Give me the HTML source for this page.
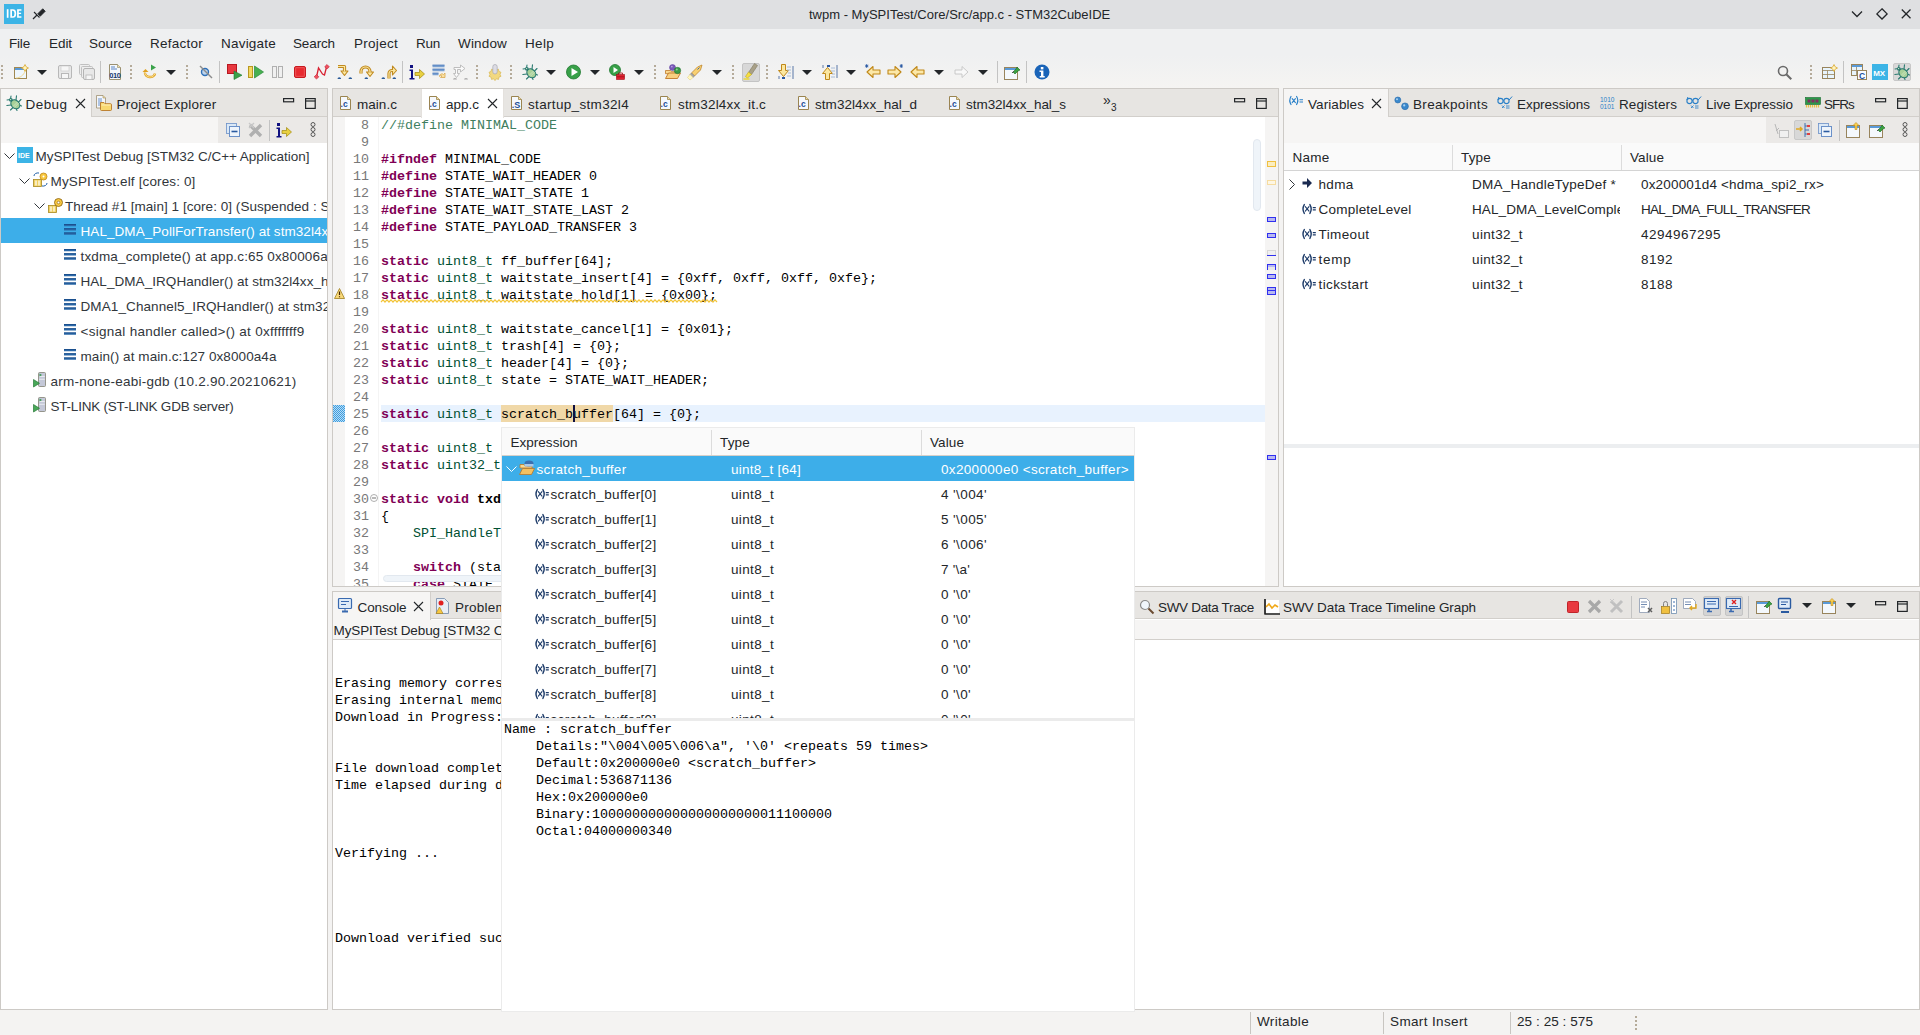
<!DOCTYPE html><html><head><meta charset="utf-8"><style>
*{box-sizing:border-box;margin:0;padding:0}
html,body{width:1920px;height:1035px;overflow:hidden;background:#f4f3f2;font-family:"Liberation Sans",sans-serif;font-size:13.5px;color:#232629}
.a{position:absolute}
.t{position:absolute;white-space:nowrap;line-height:16px}
.m{position:absolute;white-space:pre;font-family:"Liberation Mono",monospace;font-size:13.333px;line-height:17px;color:#000}
.kw{color:#7f0055;font-weight:bold}
.ty{color:#005032}
.cm{color:#3f7f5f}
.fn{font-weight:bold}
.panel{position:absolute;background:#fff;border:1px solid #c9c6c2;overflow:hidden}
.tabbar{position:absolute;left:0;top:0;right:0;height:29px;background:#e6e3df;border-bottom:1px solid #cdcac6}
.clip{position:absolute;overflow:hidden}
svg{position:absolute;overflow:visible}
</style></head><body>
<div class="a" style="left:0;top:0;width:1920px;height:29px;background:#dfe0e2"></div>
<svg style="left:4px;top:4px" width="20" height="20"><rect width="20" height="20" fill="#3cb4e6"/><rect x="2.8" y="5.2" width="1.7" height="8.6" fill="#fff"/><path d="M6.3 5.2h2.6a3.3 4.3 0 0 1 0 8.6h-2.6zM8 6.8v5.4h0.8a1.7 2.7 0 0 0 0-5.4z" fill="#fff" fill-rule="evenodd"/><path d="M13.1 5.2h4.3v1.5h-2.6v2h2.3v1.4h-2.3v2.2h2.6v1.5h-4.3z" fill="#fff"/></svg>
<svg style="left:32px;top:6px" width="14" height="14"><path d="M8.24 10.24L13.24 5.24L10.76 2.76L5.76 7.76z" fill="#232629" stroke="#232629" stroke-width="0.8" stroke-linejoin="round"/><path d="M2 6l5.5 5.5" stroke="#232629" stroke-width="1.1"/><path d="M1 13l4-4" stroke="#232629" stroke-width="1.3"/></svg>
<div class="t" style="left:809px;top:6.90px;font-size:13px;color:#232629;">twpm - MySPITest/Core/Src/app.c - STM32CubeIDE</div>
<svg style="left:1851px;top:8px" width="12" height="12"><path d="M1 3.5l5 5 5-5" stroke="#232629" stroke-width="1.3" fill="none"/></svg>
<svg style="left:1876px;top:8px" width="12" height="12"><path d="M6 0.8l5.1 5.1-5.1 5.1-5.1-5.1z" stroke="#232629" stroke-width="1.3" fill="none"/></svg>
<svg style="left:1901px;top:9px" width="10" height="10"><path d="M0.8 0.5l8.7 8.7M9.5 0.5l-8.7 8.7" stroke="#232629" stroke-width="1.3" fill="none"/></svg>
<div class="a" style="left:0;top:29px;width:1920px;height:26px;background:#eff0f1"></div>
<div class="a" style="left:0;top:55px;width:1920px;height:33px;background:linear-gradient(#eff0f1,#f5f4f2)"></div>
<div class="t" style="left:9px;top:35.82px;color:#232629;letter-spacing:-0.191px;">File</div>
<div class="t" style="left:49px;top:35.82px;color:#232629;letter-spacing:-0.066px;">Edit</div>
<div class="t" style="left:89px;top:35.82px;color:#232629;letter-spacing:0.036px;">Source</div>
<div class="t" style="left:150px;top:35.82px;color:#232629;letter-spacing:0.246px;">Refactor</div>
<div class="t" style="left:221px;top:35.82px;color:#232629;letter-spacing:0.213px;">Navigate</div>
<div class="t" style="left:293px;top:35.82px;color:#232629;letter-spacing:-0.130px;">Search</div>
<div class="t" style="left:354px;top:35.82px;color:#232629;letter-spacing:0.281px;">Project</div>
<div class="t" style="left:416px;top:35.82px;color:#232629;letter-spacing:-0.255px;">Run</div>
<div class="t" style="left:458px;top:35.82px;color:#232629;letter-spacing:0.164px;">Window</div>
<div class="t" style="left:525px;top:35.82px;color:#232629;letter-spacing:0.309px;">Help</div>
<svg style="left:1px;top:65px" width="2" height="16" viewBox="0 0 2 16"><rect x="0" y="0" width="2" height="2" fill="#b5ab9a"/><rect x="0" y="4" width="2" height="2" fill="#b5ab9a"/><rect x="0" y="8" width="2" height="2" fill="#b5ab9a"/><rect x="0" y="12" width="2" height="2" fill="#b5ab9a"/></svg>
<svg style="left:13px;top:64px" width="16" height="16" viewBox="0 0 16 16"><rect x="1.5" y="3.5" width="12" height="11" fill="#eef6fc" stroke="#a08850"/><rect x="2" y="4" width="11" height="2" fill="#5a9ad8"/><path d="M12 0.5l1.2 2.3 2.3 1.2-2.3 1.2-1.2 2.3-1.2-2.3-2.3-1.2 2.3-1.2z" fill="#fff4c0" stroke="#d9a830" stroke-width="0.8"/><path d="M3 14c4 0 8-3 9-7" stroke="#f0d890" fill="none"/></svg>
<svg style="left:37px;top:70px" width="10" height="6" viewBox="0 0 10 6"><path d="M0 0h10l-5 5z" fill="#232629"/></svg>
<svg style="left:57px;top:64px" width="16" height="16" viewBox="0 0 16 16"><rect x="1.5" y="1.5" width="13" height="13" rx="1.5" fill="#e8e8e8" stroke="#b8b8b8"/><rect x="4" y="2" width="8" height="5" fill="#f6f6f6" stroke="#c8c8c8" stroke-width="0.6"/><rect x="4.5" y="9.5" width="7" height="5" fill="#f6f6f6" stroke="#b8b8b8"/></svg>
<svg style="left:79px;top:64px" width="16" height="16" viewBox="0 0 16 16"><rect x="0.5" y="0.5" width="10" height="10" rx="1" fill="#eee" stroke="#c0c0c0"/><rect x="2.5" y="2.5" width="11" height="11" rx="1" fill="#eee" stroke="#c0c0c0"/><rect x="4.5" y="4.5" width="11" height="11" rx="1.5" fill="#e8e8e8" stroke="#b4b4b4"/><rect x="7" y="11" width="6" height="4.5" fill="#f6f6f6" stroke="#b8b8b8" stroke-width="0.8"/></svg>
<div class="a" style="left:100px;top:61px;width:1px;height:22px;background:#c3c3c3"></div>
<svg style="left:108px;top:64px" width="16" height="16" viewBox="0 0 16 16"><path d="M1.5 0.5h8l3 3v12h-11z" fill="#f4f8fc" stroke="#9a9070"/><path d="M9.5 0.5v3h3" fill="#f0e0b0" stroke="#9a9070" stroke-width="0.7"/><path d="M3 3h4M3 5h6" stroke="#4a78c0" stroke-width="0.9"/><text x="1.3" y="13.5" font-family="Liberation Sans" font-weight="bold" font-size="7.5" fill="#1a3a70" letter-spacing="-0.4">010</text></svg>
<svg style="left:130px;top:65px" width="2" height="16" viewBox="0 0 2 16"><rect x="0" y="0" width="2" height="2" fill="#b5ab9a"/><rect x="0" y="4" width="2" height="2" fill="#b5ab9a"/><rect x="0" y="8" width="2" height="2" fill="#b5ab9a"/><rect x="0" y="12" width="2" height="2" fill="#b5ab9a"/></svg>
<svg style="left:142px;top:64px" width="16" height="16" viewBox="0 0 16 16"><path d="M9 0.5v6l5-3z" fill="#3aa24a"/><path d="M3 8.5a5 4 0 1 0 10 1" stroke="#e0a020" stroke-width="2.4" fill="none"/><path d="M0.5 8l3-3 3 3z" fill="#e0a020"/><path d="M3 8.5a5 4 0 1 0 10 1" stroke="#fff2b0" stroke-width="0.8" fill="none"/></svg>
<svg style="left:166px;top:70px" width="10" height="6" viewBox="0 0 10 6"><path d="M0 0h10l-5 5z" fill="#232629"/></svg>
<svg style="left:186px;top:65px" width="2" height="16" viewBox="0 0 2 16"><rect x="0" y="0" width="2" height="2" fill="#b5ab9a"/><rect x="0" y="4" width="2" height="2" fill="#b5ab9a"/><rect x="0" y="8" width="2" height="2" fill="#b5ab9a"/><rect x="0" y="12" width="2" height="2" fill="#b5ab9a"/></svg>
<svg style="left:198px;top:64px" width="16" height="16" viewBox="0 0 16 16"><circle cx="7" cy="8" r="3.5" fill="#bcd4ee" stroke="#2f70b8" stroke-width="1.4"/><path d="M2 2l12 12" stroke="#8c8c8c" stroke-width="1.4"/></svg>
<div class="a" style="left:219px;top:61px;width:1px;height:22px;background:#c3c3c3"></div>
<svg style="left:227px;top:64px" width="16" height="16" viewBox="0 0 16 16"><rect x="0.5" y="0.5" width="9" height="9" fill="#e83840" stroke="#b81820"/><path d="M7 7v8.5l8-4.3z" fill="#3aa24a" stroke="#1f7a30" stroke-width="0.6"/></svg>
<svg style="left:248px;top:64px" width="16" height="16" viewBox="0 0 16 16"><rect x="0.5" y="2.5" width="4" height="11" fill="#f2d860" stroke="#b89820"/><path d="M6.5 2v12l9-6z" fill="#48b050" stroke="#2a8a3a" stroke-width="0.7"/></svg>
<svg style="left:271px;top:64px" width="16" height="16" viewBox="0 0 16 16"><rect x="1.5" y="2.5" width="4" height="11" fill="#f0f0f0" stroke="#b0b0b0"/><rect x="7.5" y="2.5" width="4" height="11" fill="#f0f0f0" stroke="#b0b0b0"/></svg>
<svg style="left:293px;top:64px" width="16" height="16" viewBox="0 0 16 16"><rect x="1.5" y="2.5" width="11" height="11" rx="1.5" fill="#e82a30" stroke="#c81a20"/><rect x="2.8" y="3.8" width="8.4" height="8.4" fill="none" stroke="#f07070" stroke-width="0.6"/></svg>
<svg style="left:314px;top:64px" width="16" height="16" viewBox="0 0 16 16"><path d="M2.5 13l2-9 4 6 2 1 2-8" stroke="#d82030" stroke-width="1.3" fill="none"/><path d="M2.5 10.5l2.3 2.3-2.3 2.3-2.3-2.3z" fill="#f05060" stroke="#c02030" stroke-width="0.6"/><path d="M13 0.5l2.3 2.3-2.3 2.3-2.3-2.3z" fill="#f05060" stroke="#c02030" stroke-width="0.6"/></svg>
<svg style="left:337px;top:64px" width="16" height="16" viewBox="0 0 16 16"><path d="M1 2.5h6.5v5" stroke="#c08a20" stroke-width="3.2" fill="none" stroke-linejoin="round"/><path d="M4 7h7l-3.5 4.5z" fill="#fbe7a0" stroke="#c08a20" stroke-width="1.1" stroke-linejoin="round"/><path d="M1 2.5h6.5v5" stroke="#fbe7a0" stroke-width="1.2" fill="none"/><path d="M0.5 15a1.8 1.8 0 0 1 3.6 0zM11.5 15a1.8 1.8 0 0 1 3.6 0z" fill="#2a5a98"/></svg>
<svg style="left:359px;top:64px" width="16" height="16" viewBox="0 0 16 16"><path d="M2 9.5v-2a4.5 4.5 0 0 1 9 0v1" stroke="#c08a20" stroke-width="3.2" fill="none"/><path d="M7.5 8h7l-3.5 4.5z" fill="#fbe7a0" stroke="#c08a20" stroke-width="1.1" stroke-linejoin="round"/><path d="M2 9.5v-2a4.5 4.5 0 0 1 9 0v1" stroke="#fbe7a0" stroke-width="1.2" fill="none"/><path d="M5.5 15a1.8 1.8 0 0 1 3.6 0z" fill="#2a5a98"/></svg>
<svg style="left:381px;top:64px" width="16" height="16" viewBox="0 0 16 16"><path d="M8 14.5v-5a3 3 0 0 1 3-3h1" stroke="#c08a20" stroke-width="3.2" fill="none"/><path d="M11.5 2l4 4.5-4 4.5z" fill="#fbe7a0" stroke="#c08a20" stroke-width="1.1" stroke-linejoin="round"/><path d="M8 14.5v-5a3 3 0 0 1 3-3h1" stroke="#fbe7a0" stroke-width="1.2" fill="none"/><path d="M0.5 15a1.8 1.8 0 0 1 3.6 0zM11.5 15a1.8 1.8 0 0 1 3.6 0z" fill="#2a5a98"/></svg>
<div class="a" style="left:402px;top:61px;width:1px;height:22px;background:#c3c3c3"></div>
<svg style="left:409px;top:64px" width="16" height="16" viewBox="0 0 16 16"><rect x="1" y="1" width="3" height="3" fill="#101080"/><path d="M0.5 5.5h3.5v8.5h1.5v1.5h-5v-1.5h1.5v-7h-1.5z" fill="#101080"/><path d="M6 8.5h4.5v-3l5 4.5-5 4.5v-3h-4.5z" fill="#e8d040" stroke="#a08810" stroke-width="0.7"/></svg>
<svg style="left:432px;top:64px" width="16" height="16" viewBox="0 0 16 16"><path d="M0.5 2h12M0.5 6h12M0.5 10h6" stroke="#7aa0d0" stroke-width="2.6"/><path d="M0.5 1.2h12M0.5 5.2h12M0.5 9.2h6" stroke="#5080c0" stroke-width="0.8"/><path d="M7.5 11.5c1-2 3.5-2 4-1l1.5-1.5v4.5h-4.5l1.5-1.5c-0.5-0.8-1.8-0.5-2.5 0.5z" fill="#fbe0a0" stroke="#d8a850" stroke-width="0.8"/></svg>
<svg style="left:453px;top:64px" width="16" height="16" viewBox="0 0 16 16"><path d="M1 3.5h6.5v-2.5l4.5 3.5-4.5 3.5v-2.5h-3v4h2l-3 4-3-4h2v-4h-1.5z" fill="#fafafa" stroke="#b8b8b8" stroke-width="0.9" stroke-linejoin="round"/><path d="M0 15.5a2 1.5 0 0 1 4 0zM11 15.5a2 1.5 0 0 1 4 0z" fill="#a8a8a8"/></svg>
<svg style="left:476px;top:65px" width="2" height="16" viewBox="0 0 2 16"><rect x="0" y="0" width="2" height="2" fill="#b5ab9a"/><rect x="0" y="4" width="2" height="2" fill="#b5ab9a"/><rect x="0" y="8" width="2" height="2" fill="#b5ab9a"/><rect x="0" y="12" width="2" height="2" fill="#b5ab9a"/></svg>
<svg style="left:487px;top:64px" width="16" height="16" viewBox="0 0 16 16"><path d="M8 4l1.3 1.8 2.2-0.6 0.4 2.2 2.1 0.9-1 2 1 2-2.1 0.9-0.4 2.2-2.2-0.6-1.3 1.8-1.3-1.8-2.2 0.6-0.4-2.2-2.1-0.9 1-2-1-2 2.1-0.9 0.4-2.2 2.2 0.6z" fill="#f2d880" stroke="#d8b850" stroke-width="0.7"/><rect x="5.8" y="0.5" width="4.4" height="9.5" rx="2.2" fill="#dcdce4" stroke="#a8a8b0" stroke-width="0.7"/></svg>
<svg style="left:510px;top:65px" width="2" height="16" viewBox="0 0 2 16"><rect x="0" y="0" width="2" height="2" fill="#b5ab9a"/><rect x="0" y="4" width="2" height="2" fill="#b5ab9a"/><rect x="0" y="8" width="2" height="2" fill="#b5ab9a"/><rect x="0" y="12" width="2" height="2" fill="#b5ab9a"/></svg>
<svg style="left:522px;top:64px" width="16" height="16" viewBox="0 0 16 16"><g stroke="#2a7a70" stroke-width="1.1" stroke-linecap="round"><path d="M4.5 4.5L1 5M4.5 4.5L5 1M7 12.5L4.5 15M12.5 7L15 4.5M5 10L0.8 10.5M10 5L10.5 0.8M10 13L11 15.5M13 10L15.5 11"/></g><ellipse cx="9.3" cy="9.3" rx="3.9" ry="5" transform="rotate(-45 9.3 9.3)" fill="#a8d098" stroke="#2a7a70" stroke-width="1.1"/><path d="M7 11.5L11.5 7M8.2 12.5L12.5 8.2" stroke="#d8ecd0" stroke-width="0.7"/><circle cx="4.8" cy="4.8" r="1.9" fill="#2a7a70"/><circle cx="4.6" cy="4.6" r="0.7" fill="#d8ecd0"/></svg>
<svg style="left:546px;top:70px" width="10" height="6" viewBox="0 0 10 6"><path d="M0 0h10l-5 5z" fill="#232629"/></svg>
<svg style="left:566px;top:64px" width="16" height="16" viewBox="0 0 16 16"><circle cx="7.5" cy="8" r="7" fill="#38a048" stroke="#1f7a30" stroke-width="0.8"/><path d="M5.5 4v8l6.5-4z" fill="#fff"/></svg>
<svg style="left:590px;top:70px" width="10" height="6" viewBox="0 0 10 6"><path d="M0 0h10l-5 5z" fill="#232629"/></svg>
<svg style="left:609px;top:64px" width="16" height="16" viewBox="0 0 16 16"><circle cx="6" cy="6" r="5.5" fill="#38a048" stroke="#1f7a30" stroke-width="0.8"/><path d="M4.5 3v6l4.5-3z" fill="#fff"/><rect x="7.5" y="10.5" width="8" height="5" fill="#e02030" stroke="#a01018" stroke-width="0.6"/><path d="M9.5 10.5v-1.5h4v1.5M7.5 12.8h8" stroke="#a01018" stroke-width="0.8" fill="none"/></svg>
<svg style="left:634px;top:70px" width="10" height="6" viewBox="0 0 10 6"><path d="M0 0h10l-5 5z" fill="#232629"/></svg>
<svg style="left:654px;top:65px" width="2" height="16" viewBox="0 0 2 16"><rect x="0" y="0" width="2" height="2" fill="#b5ab9a"/><rect x="0" y="4" width="2" height="2" fill="#b5ab9a"/><rect x="0" y="8" width="2" height="2" fill="#b5ab9a"/><rect x="0" y="12" width="2" height="2" fill="#b5ab9a"/></svg>
<svg style="left:665px;top:64px" width="16" height="16" viewBox="0 0 16 16"><path d="M0.5 6.5h5l1 1.2h6v2h-12z" fill="#f8d890" stroke="#c07828" stroke-width="0.8"/><path d="M0.5 14.5l3-5.5h12l-3 5.5z" fill="#f8d080" stroke="#c07828" stroke-width="0.9"/><circle cx="7.5" cy="3.5" r="3" fill="#7a5ab8" stroke="#5a3a98" stroke-width="0.5"/><circle cx="12.5" cy="6.5" r="3.2" fill="#3a9a48" stroke="#1a6a28" stroke-width="0.5"/><circle cx="11.8" cy="5.6" r="1" fill="#90d090"/><circle cx="6.8" cy="2.6" r="0.9" fill="#b8a0e0"/></svg>
<svg style="left:687px;top:64px" width="16" height="16" viewBox="0 0 16 16"><path d="M15 1l-1.5 5-6 6-3-3 6-6z" fill="#f8d070" stroke="#c08830" stroke-width="0.8"/><path d="M12.5 3.5l-2 2" stroke="#3a6ab0" stroke-width="1"/><path d="M4.5 9l3 3-1.5 1.5-3-3z" fill="#a8a8a8" stroke="#808080" stroke-width="0.6"/><path d="M3 10.5l3 3-3 2.5-2.5-2.5z" fill="#fff8c0" stroke="#e8d080" stroke-width="0.6"/></svg>
<svg style="left:712px;top:70px" width="10" height="6" viewBox="0 0 10 6"><path d="M0 0h10l-5 5z" fill="#232629"/></svg>
<svg style="left:732px;top:65px" width="2" height="16" viewBox="0 0 2 16"><rect x="0" y="0" width="2" height="2" fill="#b5ab9a"/><rect x="0" y="4" width="2" height="2" fill="#b5ab9a"/><rect x="0" y="8" width="2" height="2" fill="#b5ab9a"/><rect x="0" y="12" width="2" height="2" fill="#b5ab9a"/></svg>
<div class="a" style="left:742px;top:63px;width:18px;height:19px;background:#d8d8d8;border:1px solid #c4c4c4;border-radius:2px"></div>
<svg style="left:743px;top:64px" width="16" height="16" viewBox="0 0 16 16"><path d="M14.5 1.5l-6 9-3-2 6-9z" fill="#a8a088" stroke="#807860" stroke-width="0.6"/><path d="M8.5 10.5l-4 3.5-2-1.5 3-4.5z" fill="#f8e040" stroke="#c0a820" stroke-width="0.6"/><path d="M0.5 15h6" stroke="#f0d820" stroke-width="1.3"/></svg>
<svg style="left:766px;top:65px" width="2" height="16" viewBox="0 0 2 16"><rect x="0" y="0" width="2" height="2" fill="#b5ab9a"/><rect x="0" y="4" width="2" height="2" fill="#b5ab9a"/><rect x="0" y="8" width="2" height="2" fill="#b5ab9a"/><rect x="0" y="12" width="2" height="2" fill="#b5ab9a"/></svg>
<svg style="left:778px;top:64px" width="16" height="16" viewBox="0 0 16 16"><path d="M3.5 0.5h4v6h3l-5 6-5-6h3z" fill="#fbe7a0" stroke="#c08818" stroke-width="1"/><path d="M15 2v13M1 12v3" stroke="#5a78a8"/><path d="M9 3h4M9 6h4M10 9h3M9 12h4" stroke="#a8bcd8"/><rect x="4" y="13" width="3" height="2" fill="#2a58a0"/></svg>
<svg style="left:802px;top:70px" width="10" height="6" viewBox="0 0 10 6"><path d="M0 0h10l-5 5z" fill="#232629"/></svg>
<svg style="left:822px;top:64px" width="16" height="16" viewBox="0 0 16 16"><path d="M3.5 15.5h4v-6h3l-5-6-5 6h3z" fill="#fbe7a0" stroke="#c08818" stroke-width="1"/><path d="M15 1v13M1 1v3" stroke="#5a78a8"/><path d="M9 4h4M9 7h4M10 10h3M9 13h4" stroke="#a8bcd8"/><rect x="5" y="1" width="3" height="2" fill="#2a58a0"/></svg>
<svg style="left:846px;top:70px" width="10" height="6" viewBox="0 0 10 6"><path d="M0 0h10l-5 5z" fill="#232629"/></svg>
<svg style="left:865px;top:64px" width="16" height="16" viewBox="0 0 16 16"><path d="M15 6h-7v-3.5l-6 5.5 6 5.5v-3.5h7z" fill="#fce8a8" stroke="#c08818" stroke-width="1.1" stroke-linejoin="round"/><path d="M0.5 0.8l2.4 2.4M2.9 0.8l-2.4 2.4M1.7 0v4M0 2h3.4" stroke="#2050a0" stroke-width="0.8"/></svg>
<svg style="left:887px;top:64px" width="16" height="16" viewBox="0 0 16 16"><path d="M1 6h7v-3.5l6 5.5-6 5.5v-3.5h-7z" fill="#fce8a8" stroke="#c08818" stroke-width="1.1" stroke-linejoin="round"/><path d="M13.1 0.8l2.4 2.4M15.5 0.8l-2.4 2.4M14.3 0v4M12.6 2h3.4" stroke="#2050a0" stroke-width="0.8"/></svg>
<svg style="left:909px;top:64px" width="16" height="16" viewBox="0 0 16 16"><path d="M15 6h-7v-3.5l-6 5.5 6 5.5v-3.5h7z" fill="#fce8a8" stroke="#c08818" stroke-width="1.1" stroke-linejoin="round"/></svg>
<svg style="left:934px;top:70px" width="10" height="6" viewBox="0 0 10 6"><path d="M0 0h10l-5 5z" fill="#232629"/></svg>
<svg style="left:954px;top:64px" width="16" height="16" viewBox="0 0 16 16"><path d="M1 6h7v-3.5l6 5.5-6 5.5v-3.5h-7z" fill="#f8f8f8" stroke="#c4c4c4" stroke-width="0.9"/></svg>
<svg style="left:978px;top:70px" width="10" height="6" viewBox="0 0 10 6"><path d="M0 0h10l-5 5z" fill="#232629"/></svg>
<div class="a" style="left:997px;top:61px;width:1px;height:22px;background:#c3c3c3"></div>
<svg style="left:1004px;top:64px" width="16" height="16" viewBox="0 0 16 16"><rect x="0.5" y="3.5" width="13" height="12" fill="#f4f8fc" stroke="#98845c"/><rect x="1" y="4" width="12" height="2" fill="#5a9ad8"/><path d="M9 8l3-3 1-2 3 3-2 1-3 3z" fill="#3aa040" stroke="#1a6a20" stroke-width="0.6"/><path d="M8 9l2-2" stroke="#555"/></svg>
<div class="a" style="left:1026px;top:61px;width:1px;height:22px;background:#c3c3c3"></div>
<svg style="left:1034px;top:64px" width="16" height="16" viewBox="0 0 16 16"><circle cx="8" cy="8" r="7.5" fill="#1a64b8"/><rect x="6.8" y="3" width="2.6" height="2.4" fill="#fff"/><path d="M5.5 6.5h3.9v5.5h1.3v1.5h-5v-1.5h1.3v-4h-1.5z" fill="#fff"/></svg>
<svg style="left:1777px;top:65px" width="16" height="16" viewBox="0 0 16 16"><circle cx="6" cy="6" r="4.5" stroke="#6a6a6a" stroke-width="1.6" fill="none"/><path d="M9.3 9.3l5 5" stroke="#6a6a6a" stroke-width="2"/></svg>
<svg style="left:1810px;top:65px" width="2" height="16" viewBox="0 0 2 16"><rect x="0" y="0" width="2" height="2" fill="#b5ab9a"/><rect x="0" y="4" width="2" height="2" fill="#b5ab9a"/><rect x="0" y="8" width="2" height="2" fill="#b5ab9a"/><rect x="0" y="12" width="2" height="2" fill="#b5ab9a"/></svg>
<svg style="left:1822px;top:64px" width="16" height="16" viewBox="0 0 16 16"><rect x="0.5" y="3.5" width="12" height="11" fill="#e8f4fc" stroke="#98845c"/><path d="M0.5 6.5h12M5.5 6.5v8M0.5 10.5h12" stroke="#98845c" stroke-width="0.8"/><path d="M12 0.5l1.2 2.3 2.3 1.2-2.3 1.2-1.2 2.3-1.2-2.3-2.3-1.2 2.3-1.2z" fill="#fff4c0" stroke="#d9a830" stroke-width="0.8"/></svg>
<div class="a" style="left:1843px;top:61px;width:1px;height:22px;background:#c3c3c3"></div>
<svg style="left:1851px;top:64px" width="16" height="16" viewBox="0 0 16 16"><rect x="0.5" y="0.5" width="11" height="11" fill="#e8f4fc" stroke="#98845c"/><rect x="1" y="1" width="10" height="2" fill="#5a9ad8"/><path d="M0.5 6.5h11M5.5 3v8" stroke="#98845c" stroke-width="0.8"/><rect x="6.5" y="6.5" width="9" height="9" fill="#f8fbff" stroke="#98845c"/><text x="8" y="14.5" font-family="Liberation Sans" font-weight="bold" font-size="8.5" fill="#2050a0">C</text></svg>
<svg style="left:1872px;top:64px" width="16" height="16" viewBox="0 0 16 16"><rect x="0" y="0" width="16" height="16" fill="#3cb4e6"/><text x="1.2" y="11.5" font-family="Liberation Sans" font-weight="bold" font-size="8" fill="#fff">MX</text></svg>
<div class="a" style="left:1893px;top:63px;width:18px;height:18px;background:#d8d8d8;border:1px solid #c8c8c8;border-radius:2px"></div>
<svg style="left:1894px;top:64px" width="16" height="16" viewBox="0 0 16 16"><g stroke="#2a7a70" stroke-width="1.1" stroke-linecap="round"><path d="M4.5 4.5L1 5M4.5 4.5L5 1M7 12.5L4.5 15M12.5 7L15 4.5M5 10L0.8 10.5M10 5L10.5 0.8M10 13L11 15.5M13 10L15.5 11"/></g><ellipse cx="9.3" cy="9.3" rx="3.9" ry="5" transform="rotate(-45 9.3 9.3)" fill="#a8d098" stroke="#2a7a70" stroke-width="1.1"/><path d="M7 11.5L11.5 7M8.2 12.5L12.5 8.2" stroke="#d8ecd0" stroke-width="0.7"/><circle cx="4.8" cy="4.8" r="1.9" fill="#2a7a70"/><circle cx="4.6" cy="4.6" r="0.7" fill="#d8ecd0"/></svg>
<div class="a" style="left:0;top:88px;width:328px;height:922px;background:#fff;border:1px solid #cdcac6"></div>
<div class="a" style="left:1px;top:89px;width:326px;height:28px;background:#e7e5e2;border-bottom:1px solid #d2cfcb"></div>
<div class="a" style="left:1px;top:89px;width:91px;height:29px;background:#f6f5f4;border-right:1px solid #d2cfcb"></div>
<svg style="left:6px;top:95px" width="16" height="16" viewBox="0 0 16 16"><g stroke="#2a7a70" stroke-width="1.1" stroke-linecap="round"><path d="M4.5 4.5L1 5M4.5 4.5L5 1M7 12.5L4.5 15M12.5 7L15 4.5M5 10L0.8 10.5M10 5L10.5 0.8M10 13L11 15.5M13 10L15.5 11"/></g><ellipse cx="9.3" cy="9.3" rx="3.9" ry="5" transform="rotate(-45 9.3 9.3)" fill="#a8d098" stroke="#2a7a70" stroke-width="1.1"/><path d="M7 11.5L11.5 7M8.2 12.5L12.5 8.2" stroke="#d8ecd0" stroke-width="0.7"/><circle cx="4.8" cy="4.8" r="1.9" fill="#2a7a70"/><circle cx="4.6" cy="4.6" r="0.7" fill="#d8ecd0"/></svg>
<div class="t" style="left:25.5px;top:96.52px;letter-spacing:0.441px;">Debug</div>
<svg style="left:75px;top:98px" width="11" height="11" viewBox="0 0 11 11"><path d="M1 1l9 9M10 1l-9 9" stroke="#232629" stroke-width="1.1"/></svg>
<svg style="left:96px;top:95px" width="16" height="16" viewBox="0 0 16 16"><path d="M0.5 0.5h6.5l2.5 2.5v10h-9z" fill="#f4f6fa" stroke="#a09070" stroke-width="0.8"/><path d="M7 0.5v2.5h2.5" fill="#f0d890" stroke="#a09070" stroke-width="0.6"/><path d="M2 4h4M2 6h4M2 8h3M2 10h3" stroke="#5a88c8" stroke-width="0.9"/><path d="M4.5 7.5h3.5l1 1.2h5.5a1 1 0 0 1 1 1v4.8a1 1 0 0 1-1 1h-9a1 1 0 0 1-1-1z" fill="#f8d870" stroke="#b87828" stroke-width="0.9"/><path d="M5.5 10h9" stroke="#fff0b8" stroke-width="1"/></svg>
<div class="t" style="left:116.5px;top:96.52px;letter-spacing:0.247px;">Project Explorer</div>
<svg style="left:283px;top:98px" width="12" height="5" viewBox="0 0 12 5"><rect x="0.6" y="0.6" width="10" height="3.2" fill="none" stroke="#232629" stroke-width="1.2"/></svg>
<svg style="left:305px;top:98px" width="11" height="11" viewBox="0 0 11 11"><rect x="0.6" y="0.6" width="9.6" height="9.8" fill="none" stroke="#232629" stroke-width="1.2"/><path d="M0.6 3h9.6" stroke="#232629" stroke-width="1.2"/></svg>
<div class="a" style="left:1px;top:117px;width:326px;height:26px;background:#f6f5f4"></div>
<div class="a" style="left:218px;top:117px;width:109px;height:26px;background:#ebe9e7"></div>
<svg style="left:226px;top:123px" width="16" height="16" viewBox="0 0 16 16"><rect x="0.5" y="0.5" width="10" height="10" fill="#dae8f6" stroke="#6a90c8" stroke-width="0.8"/><rect x="3.5" y="3.5" width="10" height="10" fill="#eef4fb" stroke="#6a90c8"/><path d="M5.5 8.5h6" stroke="#2a5aa0" stroke-width="1.6"/></svg>
<svg style="left:248px;top:122px" width="16" height="16" viewBox="0 0 16 16"><path d="M2 3l11 11M13 3l-11 11" stroke="#b0b0b0" stroke-width="3.4"/><path d="M1 1l5 5M6 1l-5 5" stroke="#c8c8c8" stroke-width="1.4"/></svg>
<div class="a" style="left:269px;top:120px;width:1px;height:21px;background:#c3c3c3"></div>
<svg style="left:276px;top:122px" width="16" height="16" viewBox="0 0 16 16"><rect x="1" y="1" width="3" height="3" fill="#101080"/><path d="M0.5 5.5h3.5v8.5h1.5v1.5h-5v-1.5h1.5v-7h-1.5z" fill="#101080"/><path d="M6 8.5h4.5v-3l5 4.5-5 4.5v-3h-4.5z" fill="#e8d040" stroke="#a08810" stroke-width="0.7"/></svg>
<svg style="left:310px;top:122px" width="7" height="16" viewBox="0 0 7 16"><circle cx="3" cy="2.5" r="2" fill="none" stroke="#4a4a4a" stroke-width="0.9"/><circle cx="3" cy="7.5" r="2" fill="none" stroke="#4a4a4a" stroke-width="0.9"/><circle cx="3" cy="12.5" r="2" fill="none" stroke="#4a4a4a" stroke-width="0.9"/></svg>
<div class="clip" style="left:1px;top:143px;width:326px;height:300px">
<svg style="left:3px;top:10px" width="11" height="7" viewBox="0 0 11 7"><path d="M0.5 0.5l5 5 5-5" stroke="#31363b" stroke-width="1" fill="none"/></svg>
<svg style="left:16px;top:4px" width="16" height="16" viewBox="0 0 16 16"><rect x="0" y="0" width="16" height="16" fill="#3cb4e6"/><text x="1" y="11" font-family="Liberation Sans" font-weight="bold" font-size="7" fill="#fff">IDE</text></svg>
<div class="t" style="left:34.5px;top:5.72px;color:#31363b;letter-spacing:-0.016px;">MySPITest Debug [STM32 C/C++ Application]</div>
<svg style="left:18px;top:35px" width="11" height="7" viewBox="0 0 11 7"><path d="M0.5 0.5l5 5 5-5" stroke="#31363b" stroke-width="1" fill="none"/></svg>
<svg style="left:32px;top:29px" width="16" height="16" viewBox="0 0 16 16"><rect x="0.5" y="7.5" width="8" height="7" fill="#f0d060" stroke="#a88820" stroke-width="0.8"/><path d="M3 8.5v5M6 8.5v5" stroke="#fff" stroke-width="1.2"/><circle cx="10.5" cy="4.5" r="3.5" fill="#f8c840" stroke="#c08818" stroke-width="0.8"/><circle cx="10.5" cy="4.5" r="1" fill="#fff"/><path d="M1 4a4 3 0 0 1 5-3M9 14a4 3 0 0 0 5-3" stroke="#2060a8" stroke-width="1" fill="none"/></svg>
<div class="t" style="left:49.5px;top:30.72px;color:#31363b;letter-spacing:0.133px;">MySPITest.elf [cores: 0]</div>
<svg style="left:33px;top:60px" width="11" height="7" viewBox="0 0 11 7"><path d="M0.5 0.5l5 5 5-5" stroke="#31363b" stroke-width="1" fill="none"/></svg>
<svg style="left:47px;top:54px" width="16" height="16" viewBox="0 0 16 16"><rect x="0.5" y="8.5" width="8" height="7" fill="#f0d060" stroke="#a88820" stroke-width="0.8"/><path d="M3 9.5v5M6 9.5v5" stroke="#fff" stroke-width="1.2"/><circle cx="10.5" cy="5.5" r="4" fill="#f8c840" stroke="#886010" stroke-width="0.8"/><circle cx="10.5" cy="5.5" r="1.3" fill="#fff" stroke="#886010" stroke-width="0.6"/></svg>
<div class="t" style="left:64px;top:55.72px;color:#31363b;letter-spacing:0.044px;">Thread #1 [main] 1 [core: 0] (Suspended : Step)</div>
<div class="a" style="left:0;top:75px;width:326px;height:25px;background:#3daee9"></div>
<svg style="left:63px;top:81px" width="12" height="12" viewBox="0 0 12 12"><path d="M0 1.2h12M0 5.4h12M0 9.6h12" stroke="#2a68a8" stroke-width="2.3"/><path d="M0 0.5h12M0 4.7h12M0 8.9h12" stroke="#184a88" stroke-width="0.8"/></svg>
<div class="t" style="left:79.5px;top:80.72px;color:#fff;letter-spacing:0.061px;">HAL_DMA_PollForTransfer() at stm32l4xx_hal_dma.c:654 0x8002c38</div>
<svg style="left:63px;top:106px" width="12" height="12" viewBox="0 0 12 12"><path d="M0 1.2h12M0 5.4h12M0 9.6h12" stroke="#2a68a8" stroke-width="2.3"/><path d="M0 0.5h12M0 4.7h12M0 8.9h12" stroke="#184a88" stroke-width="0.8"/></svg>
<div class="t" style="left:79.5px;top:105.72px;color:#31363b;letter-spacing:0.153px;">txdma_complete() at app.c:65 0x80006a4</div>
<svg style="left:63px;top:131px" width="12" height="12" viewBox="0 0 12 12"><path d="M0 1.2h12M0 5.4h12M0 9.6h12" stroke="#2a68a8" stroke-width="2.3"/><path d="M0 0.5h12M0 4.7h12M0 8.9h12" stroke="#184a88" stroke-width="0.8"/></svg>
<div class="t" style="left:79.5px;top:130.72px;color:#31363b;letter-spacing:0.058px;">HAL_DMA_IRQHandler() at stm32l4xx_hal_dma.c:712 0x8002d40</div>
<svg style="left:63px;top:156px" width="12" height="12" viewBox="0 0 12 12"><path d="M0 1.2h12M0 5.4h12M0 9.6h12" stroke="#2a68a8" stroke-width="2.3"/><path d="M0 0.5h12M0 4.7h12M0 8.9h12" stroke="#184a88" stroke-width="0.8"/></svg>
<div class="t" style="left:79.5px;top:155.72px;color:#31363b;letter-spacing:0.104px;">DMA1_Channel5_IRQHandler() at stm32l4xx_it.c:210 0x80011c4</div>
<svg style="left:63px;top:181px" width="12" height="12" viewBox="0 0 12 12"><path d="M0 1.2h12M0 5.4h12M0 9.6h12" stroke="#2a68a8" stroke-width="2.3"/><path d="M0 0.5h12M0 4.7h12M0 8.9h12" stroke="#184a88" stroke-width="0.8"/></svg>
<div class="t" style="left:79.5px;top:180.72px;color:#31363b;letter-spacing:0.278px;">&lt;signal handler called&gt;() at 0xfffffff9</div>
<svg style="left:63px;top:206px" width="12" height="12" viewBox="0 0 12 12"><path d="M0 1.2h12M0 5.4h12M0 9.6h12" stroke="#2a68a8" stroke-width="2.3"/><path d="M0 0.5h12M0 4.7h12M0 8.9h12" stroke="#184a88" stroke-width="0.8"/></svg>
<div class="t" style="left:79.5px;top:205.72px;color:#31363b;letter-spacing:0.079px;">main() at main.c:127 0x8000a4a</div>
<svg style="left:31px;top:229px" width="16" height="16" viewBox="0 0 16 16"><rect x="6.5" y="0.5" width="7" height="14" rx="1" fill="#c4c8d8" stroke="#8c8c80" stroke-width="0.9"/><path d="M7.2 4.5h5.6M7.2 7.3h5.6" stroke="#e8eaf0" stroke-width="1"/><path d="M7.5 1.5v3l2.5-1.5z" fill="#3a9a50"/><path d="M1.5 7.5v7.5l6-3.7z" fill="#48a858" stroke="#2a7a3a" stroke-width="0.7"/></svg>
<div class="t" style="left:49.5px;top:230.72px;color:#31363b;letter-spacing:0.266px;">arm-none-eabi-gdb (10.2.90.20210621)</div>
<svg style="left:31px;top:254px" width="16" height="16" viewBox="0 0 16 16"><rect x="6.5" y="0.5" width="7" height="14" rx="1" fill="#c4c8d8" stroke="#8c8c80" stroke-width="0.9"/><path d="M7.2 4.5h5.6M7.2 7.3h5.6" stroke="#e8eaf0" stroke-width="1"/><path d="M7.5 1.5v3l2.5-1.5z" fill="#3a9a50"/><path d="M1.5 7.5v7.5l6-3.7z" fill="#48a858" stroke="#2a7a3a" stroke-width="0.7"/></svg>
<div class="t" style="left:49.5px;top:255.72px;color:#31363b;letter-spacing:-0.216px;">ST-LINK (ST-LINK GDB server)</div>
</div>
<div class="a" style="left:332px;top:88px;width:947px;height:499px;background:#fff;border:1px solid #cdcac6"></div>
<div class="a" style="left:333px;top:89px;width:945px;height:28px;background:#e7e5e2;border-bottom:1px solid #d2cfcb"></div>
<div class="a" style="left:421px;top:89px;width:83px;height:29px;background:#fff;border-left:1px solid #e4e1dd;border-right:1px solid #e4e1dd"></div>
<svg style="left:340px;top:96px" width="11" height="14" viewBox="0 0 11 14"><path d="M0.5 0.5h7l3 3v10h-10z" fill="#f6f9fd" stroke="#9a8450"/><path d="M7.5 0.5v3h3" fill="#f0dca0" stroke="#9a8450" stroke-width="0.8"/><text x="0.6" y="11.3" font-family="Liberation Sans" font-weight="bold" font-size="8.5" fill="#1f4f98">.c</text></svg>
<div class="t" style="left:357px;top:96.52px;letter-spacing:0.039px;">main.c</div>
<svg style="left:429px;top:96px" width="11" height="14" viewBox="0 0 11 14"><path d="M0.5 0.5h7l3 3v10h-10z" fill="#f6f9fd" stroke="#9a8450"/><path d="M7.5 0.5v3h3" fill="#f0dca0" stroke="#9a8450" stroke-width="0.8"/><text x="0.6" y="11.3" font-family="Liberation Sans" font-weight="bold" font-size="8.5" fill="#1f4f98">.c</text></svg>
<div class="t" style="left:446px;top:96.52px;letter-spacing:-0.006px;">app.c</div>
<svg style="left:511px;top:96px" width="11" height="14" viewBox="0 0 11 14"><path d="M0.5 0.5h7l3 3v10h-10z" fill="#f6f9fd" stroke="#9a8450"/><path d="M7.5 0.5v3h3" fill="#f0dca0" stroke="#9a8450" stroke-width="0.8"/><text x="0.8" y="11.5" font-family="Liberation Sans" font-weight="bold" font-size="9" fill="#1f4f98">.S</text></svg>
<div class="t" style="left:528px;top:96.52px;letter-spacing:0.329px;">startup_stm32l4</div>
<svg style="left:660px;top:96px" width="11" height="14" viewBox="0 0 11 14"><path d="M0.5 0.5h7l3 3v10h-10z" fill="#f6f9fd" stroke="#9a8450"/><path d="M7.5 0.5v3h3" fill="#f0dca0" stroke="#9a8450" stroke-width="0.8"/><text x="0.6" y="11.3" font-family="Liberation Sans" font-weight="bold" font-size="8.5" fill="#1f4f98">.c</text></svg>
<div class="t" style="left:678px;top:96.52px;letter-spacing:0.176px;">stm32l4xx_it.c</div>
<svg style="left:798px;top:96px" width="11" height="14" viewBox="0 0 11 14"><path d="M0.5 0.5h7l3 3v10h-10z" fill="#f6f9fd" stroke="#9a8450"/><path d="M7.5 0.5v3h3" fill="#f0dca0" stroke="#9a8450" stroke-width="0.8"/><text x="0.6" y="11.3" font-family="Liberation Sans" font-weight="bold" font-size="8.5" fill="#1f4f98">.c</text></svg>
<div class="t" style="left:815px;top:96.52px;letter-spacing:0.046px;">stm32l4xx_hal_d</div>
<svg style="left:949px;top:96px" width="11" height="14" viewBox="0 0 11 14"><path d="M0.5 0.5h7l3 3v10h-10z" fill="#f6f9fd" stroke="#9a8450"/><path d="M7.5 0.5v3h3" fill="#f0dca0" stroke="#9a8450" stroke-width="0.8"/><text x="0.6" y="11.3" font-family="Liberation Sans" font-weight="bold" font-size="8.5" fill="#1f4f98">.c</text></svg>
<div class="t" style="left:966px;top:96.52px;letter-spacing:-0.037px;">stm32l4xx_hal_s</div>
<svg style="left:487px;top:98px" width="11" height="11" viewBox="0 0 11 11"><path d="M1 1l9 9M10 1l-9 9" stroke="#232629" stroke-width="1.1"/></svg>
<div class="t" style="left:1103px;top:91.85px;font-size:14px;">&#187;</div>
<div class="t" style="left:1111px;top:99.73px;font-size:10px;">3</div>
<svg style="left:1234px;top:98px" width="12" height="5" viewBox="0 0 12 5"><rect x="0.6" y="0.6" width="10" height="3.2" fill="none" stroke="#232629" stroke-width="1.2"/></svg>
<svg style="left:1256px;top:98px" width="11" height="11" viewBox="0 0 11 11"><rect x="0.6" y="0.6" width="9.6" height="9.8" fill="none" stroke="#232629" stroke-width="1.2"/><path d="M0.6 3h9.6" stroke="#232629" stroke-width="1.2"/></svg>
<div class="a" style="left:333px;top:117px;width:12px;height:469px;background:#f5f4f3"></div>
<div class="a" style="left:378px;top:117px;width:1px;height:469px;background:#f4f4f4"></div>
<div class="a" style="left:1265px;top:117px;width:13px;height:469px;background:#f5f4f3"></div>
<div class="a" style="left:381px;top:405px;width:884px;height:17px;background:#e8f2fe"></div>
<div class="a" style="left:501px;top:405px;width:112px;height:17px;background:#f0d8a8"></div>
<svg style="left:333px;top:405px" width="12" height="17"><defs><pattern id="ck" width="2" height="2" patternUnits="userSpaceOnUse"><rect width="2" height="2" fill="#b8dcf4"/><rect width="1" height="1" fill="#3d9de0"/><rect x="1" y="1" width="1" height="1" fill="#3d9de0"/></pattern></defs><rect width="12" height="17" fill="url(#ck)"/></svg>
<svg style="left:334px;top:288px" width="11" height="11" viewBox="0 0 11 11"><path d="M5.5 0.5l5 10h-10z" fill="#f8d878" stroke="#a08020" stroke-width="0.8"/><path d="M5.5 3.5v3.5M5.5 8.3v1" stroke="#402000" stroke-width="1.2"/></svg>
<div class="clip" style="left:333px;top:117px;width:932px;height:469px">
<div class="m" style="left:0;top:0px;width:36px;text-align:right;color:#787878">8</div>
<div class="m" style="left:48px;top:0px"><span class="cm">//#define MINIMAL_CODE</span></div>
<div class="m" style="left:0;top:17px;width:36px;text-align:right;color:#787878">9</div>
<div class="m" style="left:0;top:34px;width:36px;text-align:right;color:#787878">10</div>
<div class="m" style="left:48px;top:34px"><span class="kw">#ifndef</span> MINIMAL_CODE</div>
<div class="m" style="left:0;top:51px;width:36px;text-align:right;color:#787878">11</div>
<div class="m" style="left:48px;top:51px"><span class="kw">#define</span> STATE_WAIT_HEADER 0</div>
<div class="m" style="left:0;top:68px;width:36px;text-align:right;color:#787878">12</div>
<div class="m" style="left:48px;top:68px"><span class="kw">#define</span> STATE_WAIT_STATE 1</div>
<div class="m" style="left:0;top:85px;width:36px;text-align:right;color:#787878">13</div>
<div class="m" style="left:48px;top:85px"><span class="kw">#define</span> STATE_WAIT_STATE_LAST 2</div>
<div class="m" style="left:0;top:102px;width:36px;text-align:right;color:#787878">14</div>
<div class="m" style="left:48px;top:102px"><span class="kw">#define</span> STATE_PAYLOAD_TRANSFER 3</div>
<div class="m" style="left:0;top:119px;width:36px;text-align:right;color:#787878">15</div>
<div class="m" style="left:0;top:136px;width:36px;text-align:right;color:#787878">16</div>
<div class="m" style="left:48px;top:136px"><span class="kw">static</span> <span class="ty">uint8_t</span> ff_buffer[64];</div>
<div class="m" style="left:0;top:153px;width:36px;text-align:right;color:#787878">17</div>
<div class="m" style="left:48px;top:153px"><span class="kw">static</span> <span class="ty">uint8_t</span> waitstate_insert[4] = {0xff, 0xff, 0xff, 0xfe};</div>
<div class="m" style="left:0;top:170px;width:36px;text-align:right;color:#787878">18</div>
<div class="m" style="left:48px;top:170px"><span class="kw">static</span> <span class="ty">uint8_t</span> waitstate_hold[1] = {0x00};</div>
<div class="m" style="left:0;top:187px;width:36px;text-align:right;color:#787878">19</div>
<div class="m" style="left:0;top:204px;width:36px;text-align:right;color:#787878">20</div>
<div class="m" style="left:48px;top:204px"><span class="kw">static</span> <span class="ty">uint8_t</span> waitstate_cancel[1] = {0x01};</div>
<div class="m" style="left:0;top:221px;width:36px;text-align:right;color:#787878">21</div>
<div class="m" style="left:48px;top:221px"><span class="kw">static</span> <span class="ty">uint8_t</span> trash[4] = {0};</div>
<div class="m" style="left:0;top:238px;width:36px;text-align:right;color:#787878">22</div>
<div class="m" style="left:48px;top:238px"><span class="kw">static</span> <span class="ty">uint8_t</span> header[4] = {0};</div>
<div class="m" style="left:0;top:255px;width:36px;text-align:right;color:#787878">23</div>
<div class="m" style="left:48px;top:255px"><span class="kw">static</span> <span class="ty">uint8_t</span> state = STATE_WAIT_HEADER;</div>
<div class="m" style="left:0;top:272px;width:36px;text-align:right;color:#787878">24</div>
<div class="m" style="left:0;top:289px;width:36px;text-align:right;color:#787878">25</div>
<div class="m" style="left:48px;top:289px"><span class="kw">static</span> <span class="ty">uint8_t</span> scratch_buffer[64] = {0};</div>
<div class="m" style="left:0;top:306px;width:36px;text-align:right;color:#787878">26</div>
<div class="m" style="left:0;top:323px;width:36px;text-align:right;color:#787878">27</div>
<div class="m" style="left:48px;top:323px"><span class="kw">static</span> <span class="ty">uint8_t</span> payload_len = 0;</div>
<div class="m" style="left:0;top:340px;width:36px;text-align:right;color:#787878">28</div>
<div class="m" style="left:48px;top:340px"><span class="kw">static</span> <span class="ty">uint32_t</span> payload_idx = 0;</div>
<div class="m" style="left:0;top:357px;width:36px;text-align:right;color:#787878">29</div>
<div class="m" style="left:0;top:374px;width:36px;text-align:right;color:#787878">30</div>
<div class="m" style="left:48px;top:374px"><span class="kw">static</span> <span class="kw">void</span> <span class="fn">txdma_complete</span>(<span class="ty">SPI_HandleTypeDef</span> *hspi)</div>
<div class="m" style="left:0;top:391px;width:36px;text-align:right;color:#787878">31</div>
<div class="m" style="left:48px;top:391px">{</div>
<div class="m" style="left:0;top:408px;width:36px;text-align:right;color:#787878">32</div>
<div class="m" style="left:48px;top:408px">    <span class="ty">SPI_HandleTypeDef</span> *spi = hspi;</div>
<div class="m" style="left:0;top:425px;width:36px;text-align:right;color:#787878">33</div>
<div class="m" style="left:0;top:442px;width:36px;text-align:right;color:#787878">34</div>
<div class="m" style="left:48px;top:442px">    <span class="kw">switch</span> (state) {</div>
<div class="m" style="left:0;top:459px;width:36px;text-align:right;color:#787878">35</div>
<div class="m" style="left:48px;top:459px">    <span class="kw">case</span> STATE_WAIT_HEADER:</div>
</div>
<svg style="left:381px;top:299px" width="337" height="4" viewBox="0 0 337 4"><path d="M0 3 l2 -2.2 l2 2.2 l2 -2.2 l2 2.2 l2 -2.2 l2 2.2 l2 -2.2 l2 2.2 l2 -2.2 l2 2.2 l2 -2.2 l2 2.2 l2 -2.2 l2 2.2 l2 -2.2 l2 2.2 l2 -2.2 l2 2.2 l2 -2.2 l2 2.2 l2 -2.2 l2 2.2 l2 -2.2 l2 2.2 l2 -2.2 l2 2.2 l2 -2.2 l2 2.2 l2 -2.2 l2 2.2 l2 -2.2 l2 2.2 l2 -2.2 l2 2.2 l2 -2.2 l2 2.2 l2 -2.2 l2 2.2 l2 -2.2 l2 2.2 l2 -2.2 l2 2.2 l2 -2.2 l2 2.2 l2 -2.2 l2 2.2 l2 -2.2 l2 2.2 l2 -2.2 l2 2.2 l2 -2.2 l2 2.2 l2 -2.2 l2 2.2 l2 -2.2 l2 2.2 l2 -2.2 l2 2.2 l2 -2.2 l2 2.2 l2 -2.2 l2 2.2 l2 -2.2 l2 2.2 l2 -2.2 l2 2.2 l2 -2.2 l2 2.2 l2 -2.2 l2 2.2 l2 -2.2 l2 2.2 l2 -2.2 l2 2.2 l2 -2.2 l2 2.2 l2 -2.2 l2 2.2 l2 -2.2 l2 2.2 l2 -2.2 l2 2.2 l2 -2.2 l2 2.2 l2 -2.2 l2 2.2 l2 -2.2 l2 2.2 l2 -2.2 l2 2.2 l2 -2.2 l2 2.2 l2 -2.2 l2 2.2 l2 -2.2 l2 2.2 l2 -2.2 l2 2.2 l2 -2.2 l2 2.2 l2 -2.2 l2 2.2 l2 -2.2 l2 2.2 l2 -2.2 l2 2.2 l2 -2.2 l2 2.2 l2 -2.2 l2 2.2 l2 -2.2 l2 2.2 l2 -2.2 l2 2.2 l2 -2.2 l2 2.2 l2 -2.2 l2 2.2 l2 -2.2 l2 2.2 l2 -2.2 l2 2.2 l2 -2.2 l2 2.2 l2 -2.2 l2 2.2 l2 -2.2 l2 2.2 l2 -2.2 l2 2.2 l2 -2.2 l2 2.2 l2 -2.2 l2 2.2 l2 -2.2 l2 2.2 l2 -2.2 l2 2.2 l2 -2.2 l2 2.2 l2 -2.2 l2 2.2 l2 -2.2 l2 2.2 l2 -2.2 l2 2.2 l2 -2.2 l2 2.2 l2 -2.2 l2 2.2 l2 -2.2 l2 2.2 l2 -2.2 l2 2.2 l2 -2.2 l2 2.2 l2 -2.2 l2 2.2 l2 -2.2 l2 2.2 l2 -2.2 l2 2.2 l2 -2.2 l2 2.2 l2 -2.2 l2 2.2 l2 -2.2 l2 2.2" stroke="#f2c438" stroke-width="1.2" fill="none"/></svg>
<div class="a" style="left:573px;top:405px;width:2px;height:17px;background:#101040"></div>
<svg style="left:370px;top:494px" width="8" height="8" viewBox="0 0 8 8"><circle cx="4" cy="4" r="3.5" fill="#fff" stroke="#9a9a9a" stroke-width="0.8"/><path d="M2 4h4" stroke="#606060" stroke-width="0.9"/></svg>
<div class="a" style="left:1253px;top:139px;width:8px;height:72px;background:#eff4f9;border:1px solid #e2e8ef;border-radius:4px"></div>
<div class="a" style="left:383px;top:575px;width:700px;height:7px;background:#eff4f9;border:1px solid #e2e8ef;border-radius:4px"></div>
<div class="a" style="left:1267px;top:161px;width:9px;height:6px;background:#fbeec0;border:1px solid #f0c040"></div>
<div class="a" style="left:1267px;top:180px;width:9px;height:5px;background:#fdf6e4;border:1px solid #f6dca0"></div>
<div class="a" style="left:1267px;top:217px;width:9px;height:5px;background:#b8b8f0;border:1px solid #3030f0"></div>
<div class="a" style="left:1267px;top:233px;width:9px;height:5px;background:#b8b8f0;border:1px solid #3030f0"></div>
<div class="a" style="left:1267px;top:250px;width:9px;height:6px;background:#f0f0f0;border:1px solid #d8d8d8"></div>
<div class="a" style="left:1267px;top:264px;width:9px;height:6px;background:#b8b8f0;border:1px solid #3030f0"></div>
<div class="a" style="left:1267px;top:274px;width:9px;height:5px;background:#b8b8f0;border:1px solid #3030f0"></div>
<div class="a" style="left:1267px;top:287px;width:9px;height:8px;background:#b8b8f0;border:1px solid #3030f0"></div>
<div class="a" style="left:1267px;top:455px;width:9px;height:5px;background:#b8b8f0;border:1px solid #3030f0"></div>
<div class="a" style="left:1267px;top:255px;width:9px;height:1px;background:#3030f0"></div>
<div class="a" style="left:1267px;top:264px;width:9px;height:1px;background:#3030f0"></div>
<div class="a" style="left:1268px;top:267px;width:7px;height:3px;background:#e8e8e8"></div>
<div class="a" style="left:1267px;top:290px;width:9px;height:1px;background:#3030f0"></div>
<div class="a" style="left:1283px;top:88px;width:637px;height:499px;background:#fff;border:1px solid #cdcac6"></div>
<div class="a" style="left:1284px;top:89px;width:635px;height:28px;background:#e7e5e2;border-bottom:1px solid #d2cfcb"></div>
<div class="a" style="left:1284px;top:89px;width:105px;height:29px;background:#f6f5f4;border-right:1px solid #d2cfcb"></div>
<svg style="left:1288px;top:95px" width="16" height="16" viewBox="0 0 16 16"><path d="M3 1.5Q0.6 5.5 3 9.5M8.6 1.5Q11 5.5 8.6 9.5" stroke="#2a80c8" stroke-width="1.2" fill="none" stroke-linecap="round"/><path d="M4.2 3.6L7.4 7.6M7.4 3.6L4.2 7.6" stroke="#2a80c8" stroke-width="1.1" stroke-linecap="round"/><path d="M11.5 4.8h3.5M11.5 7h3.5" stroke="#2a80c8" stroke-width="1.1"/></svg>
<div class="t" style="left:1308px;top:96.52px;letter-spacing:0.080px;">Variables</div>
<svg style="left:1371px;top:98px" width="11" height="11" viewBox="0 0 11 11"><path d="M1 1l9 9M10 1l-9 9" stroke="#232629" stroke-width="1.1"/></svg>
<svg style="left:1394px;top:96px" width="16" height="16" viewBox="0 0 16 16"><circle cx="3.8" cy="4" r="3" fill="#3a88cc" stroke="#2a6aa8" stroke-width="0.6"/><circle cx="11" cy="10.3" r="3.4" fill="#3a88cc" stroke="#2a6aa8" stroke-width="0.6"/><circle cx="3" cy="3.2" r="1" fill="#a8d0f0"/><circle cx="10.2" cy="9.4" r="1.1" fill="#a8d0f0"/></svg>
<div class="t" style="left:1413px;top:96.52px;letter-spacing:0.337px;">Breakpoints</div>
<svg style="left:1497px;top:95px" width="16" height="16" viewBox="0 0 16 16"><circle cx="3.5" cy="6" r="2.6" fill="none" stroke="#2a80c8" stroke-width="1.1"/><circle cx="9.5" cy="6" r="2.6" fill="none" stroke="#2a80c8" stroke-width="1.1"/><path d="M6.1 5.5h0.8M0.9 5l1-3M12.1 5l3-3.5" stroke="#2a80c8" stroke-width="1"/><path d="M5 10.5l2.5 2.5M7.5 10.5l-2.5 2.5M9 11h3.5M9 13h3.5" stroke="#2a80c8" stroke-width="0.9"/></svg>
<div class="t" style="left:1517px;top:96.52px;letter-spacing:-0.050px;">Expressions</div>
<svg style="left:1599px;top:95px" width="16" height="16" viewBox="0 0 16 16"><text x="1" y="6.5" font-family="Liberation Sans" font-size="6.5" fill="#2a80c8">1010</text><text x="1" y="13.5" font-family="Liberation Sans" font-size="6.5" fill="#2a80c8">0101</text></svg>
<div class="t" style="left:1619px;top:96.52px;letter-spacing:0.108px;">Registers</div>
<svg style="left:1686px;top:95px" width="16" height="16" viewBox="0 0 16 16"><circle cx="3.5" cy="6" r="2.6" fill="none" stroke="#2a80c8" stroke-width="1.1"/><circle cx="9.5" cy="6" r="2.6" fill="none" stroke="#2a80c8" stroke-width="1.1"/><path d="M6.1 5.5h0.8M0.9 5l1-3M12.1 5l3-3.5" stroke="#2a80c8" stroke-width="1"/><path d="M5 10.5l2.5 2.5M7.5 10.5l-2.5 2.5M9 11h3.5M9 13h3.5" stroke="#2a80c8" stroke-width="0.9"/></svg>
<div class="t" style="left:1706px;top:96.52px;letter-spacing:-0.057px;">Live Expressio</div>
<svg style="left:1805px;top:95px" width="16" height="16" viewBox="0 0 16 16"><rect x="0.5" y="2.5" width="15" height="7" fill="#2a9a48" stroke="#1a6a30" stroke-width="0.6"/><rect x="2.5" y="4.5" width="3" height="3" fill="#803060"/><rect x="6.5" y="4.5" width="3" height="3" fill="#803060"/><rect x="10.5" y="4.5" width="3" height="3" fill="#803060"/><path d="M1.5 10v2.5M3.5 10v2.5M5.5 10v2.5M7.5 10v2.5M9.5 10v2.5M11.5 10v2.5M13.5 10v2.5" stroke="#e8c040" stroke-width="1.2"/></svg>
<div class="t" style="left:1824px;top:96.52px;letter-spacing:-1.000px;">SFRs</div>
<svg style="left:1875px;top:98px" width="12" height="5" viewBox="0 0 12 5"><rect x="0.6" y="0.6" width="10" height="3.2" fill="none" stroke="#232629" stroke-width="1.2"/></svg>
<svg style="left:1897px;top:98px" width="11" height="11" viewBox="0 0 11 11"><rect x="0.6" y="0.6" width="9.6" height="9.8" fill="none" stroke="#232629" stroke-width="1.2"/><path d="M0.6 3h9.6" stroke="#232629" stroke-width="1.2"/></svg>
<div class="a" style="left:1284px;top:117px;width:635px;height:26px;background:#f6f5f4"></div>
<div class="a" style="left:1766px;top:117px;width:153px;height:26px;background:#ebe9e7"></div>
<svg style="left:1773px;top:122px" width="16" height="16" viewBox="0 0 16 16"><path d="M2 2l3 10M6 6l-3 3" stroke="#b8b8b8" stroke-width="1"/><rect x="6.5" y="8.5" width="9" height="7" fill="#f0f0f0" stroke="#c0c0c0"/></svg>
<div class="a" style="left:1794px;top:120px;width:18px;height:20px;background:#d8d8d8;border:1px solid #c8c8c8;border-radius:2px"></div>
<svg style="left:1795px;top:122px" width="16" height="16" viewBox="0 0 16 16"><path d="M1 7h6M5 5l2 2-2 2" stroke="#e0a820" stroke-width="1.5" fill="none"/><path d="M10 1v14M10 4h4M10 8h4M10 12h4" stroke="#4070b0" stroke-width="1"/><rect x="12" y="3" width="3" height="2" fill="#e04040"/><rect x="12" y="11" width="3" height="2" fill="#e04040"/></svg>
<svg style="left:1818px;top:123px" width="16" height="16" viewBox="0 0 16 16"><rect x="0.5" y="0.5" width="10" height="10" fill="#dae8f6" stroke="#6a90c8" stroke-width="0.8"/><rect x="3.5" y="3.5" width="10" height="10" fill="#eef4fb" stroke="#6a90c8"/><path d="M5.5 8.5h6" stroke="#2a5aa0" stroke-width="1.6"/></svg>
<div class="a" style="left:1839px;top:120px;width:1px;height:21px;background:#c3c3c3"></div>
<svg style="left:1846px;top:122px" width="16" height="16" viewBox="0 0 16 16"><rect x="0.5" y="3.5" width="13" height="12" fill="#f4f8fc" stroke="#98845c"/><rect x="1" y="4" width="12" height="2" fill="#5a9ad8"/><path d="M10 0.5l3 3h-2v4h-2v-4h-2z" fill="#f8d050" stroke="#c08818" stroke-width="0.6"/></svg>
<svg style="left:1869px;top:122px" width="16" height="16" viewBox="0 0 16 16"><rect x="0.5" y="3.5" width="13" height="12" fill="#f4f8fc" stroke="#98845c"/><rect x="1" y="4" width="12" height="2" fill="#5a9ad8"/><path d="M9 8l3-3 1-2 3 3-2 1-3 3z" fill="#3aa040" stroke="#1a6a20" stroke-width="0.6"/><path d="M8 9l2-2" stroke="#555"/></svg>
<svg style="left:1902px;top:122px" width="7" height="16" viewBox="0 0 7 16"><circle cx="3" cy="2.5" r="2" fill="none" stroke="#4a4a4a" stroke-width="0.9"/><circle cx="3" cy="7.5" r="2" fill="none" stroke="#4a4a4a" stroke-width="0.9"/><circle cx="3" cy="12.5" r="2" fill="none" stroke="#4a4a4a" stroke-width="0.9"/></svg>
<div class="a" style="left:1284px;top:143px;width:635px;height:28px;background:#fafafa;border-bottom:1px solid #d4d4d4"></div>
<div class="a" style="left:1452px;top:145px;width:1px;height:25px;background:#dcdcdc"></div>
<div class="a" style="left:1621px;top:145px;width:1px;height:25px;background:#dcdcdc"></div>
<div class="t" style="left:1292.5px;top:150.02px;letter-spacing:0.246px;">Name</div>
<div class="t" style="left:1461px;top:150.02px;letter-spacing:0.180px;">Type</div>
<div class="t" style="left:1630px;top:150.02px;letter-spacing:0.094px;">Value</div>
<svg style="left:1289px;top:179px" width="7" height="11" viewBox="0 0 7 11"><path d="M0.5 0.5l5 5-5 5" stroke="#31363b" stroke-width="1" fill="none"/></svg>
<svg style="left:1302px;top:178px" width="11" height="11" viewBox="0 0 11 11"><path d="M0.5 3.5h4.5v-3.5l5 5-5 5v-3.5h-4.5z" fill="#1a2a50"/></svg>
<div class="t" style="left:1318.5px;top:176.52px;letter-spacing:0.305px;">hdma</div>
<div class="clip" style="left:1462px;top:171px;width:158px;height:25px">
<div class="t" style="left:10px;top:5.52px;letter-spacing:0.233px;">DMA_HandleTypeDef *</div>
</div>
<div class="t" style="left:1641px;top:176.52px;letter-spacing:0.174px;">0x200001d4 &lt;hdma_spi2_rx&gt;</div>
<svg style="left:1301px;top:204px" width="16" height="10" viewBox="0 0 16 10"><path d="M3.3 0.6Q0.7 5 3.3 9.4M8.9 0.6Q11.5 5 8.9 9.4" stroke="#1c3a68" stroke-width="1.4" fill="none" stroke-linecap="round"/><path d="M4.3 2.7L8 7.1M8 2.7L4.3 7.1" stroke="#1c3a68" stroke-width="1.1" stroke-linecap="round"/><path d="M11.8 3.6h3M11.8 5.9h3" stroke="#1c3a68" stroke-width="1.1"/></svg>
<div class="t" style="left:1318.5px;top:201.52px;letter-spacing:0.226px;">CompleteLevel</div>
<div class="clip" style="left:1462px;top:196px;width:158px;height:25px">
<div class="t" style="left:10px;top:5.52px;letter-spacing:0.121px;">HAL_DMA_LevelCompleteTypeDef</div>
</div>
<div class="t" style="left:1641px;top:201.52px;letter-spacing:-0.741px;">HAL_DMA_FULL_TRANSFER</div>
<svg style="left:1301px;top:229px" width="16" height="10" viewBox="0 0 16 10"><path d="M3.3 0.6Q0.7 5 3.3 9.4M8.9 0.6Q11.5 5 8.9 9.4" stroke="#1c3a68" stroke-width="1.4" fill="none" stroke-linecap="round"/><path d="M4.3 2.7L8 7.1M8 2.7L4.3 7.1" stroke="#1c3a68" stroke-width="1.1" stroke-linecap="round"/><path d="M11.8 3.6h3M11.8 5.9h3" stroke="#1c3a68" stroke-width="1.1"/></svg>
<div class="t" style="left:1318.5px;top:226.52px;letter-spacing:0.391px;">Timeout</div>
<div class="clip" style="left:1462px;top:221px;width:158px;height:25px">
<div class="t" style="left:10px;top:5.52px;letter-spacing:0.369px;">uint32_t</div>
</div>
<div class="t" style="left:1641px;top:226.52px;letter-spacing:0.491px;">4294967295</div>
<svg style="left:1301px;top:254px" width="16" height="10" viewBox="0 0 16 10"><path d="M3.3 0.6Q0.7 5 3.3 9.4M8.9 0.6Q11.5 5 8.9 9.4" stroke="#1c3a68" stroke-width="1.4" fill="none" stroke-linecap="round"/><path d="M4.3 2.7L8 7.1M8 2.7L4.3 7.1" stroke="#1c3a68" stroke-width="1.1" stroke-linecap="round"/><path d="M11.8 3.6h3M11.8 5.9h3" stroke="#1c3a68" stroke-width="1.1"/></svg>
<div class="t" style="left:1318.5px;top:251.52px;letter-spacing:0.746px;">temp</div>
<div class="clip" style="left:1462px;top:246px;width:158px;height:25px">
<div class="t" style="left:10px;top:5.52px;letter-spacing:0.369px;">uint32_t</div>
</div>
<div class="t" style="left:1641px;top:251.52px;letter-spacing:0.488px;">8192</div>
<svg style="left:1301px;top:279px" width="16" height="10" viewBox="0 0 16 10"><path d="M3.3 0.6Q0.7 5 3.3 9.4M8.9 0.6Q11.5 5 8.9 9.4" stroke="#1c3a68" stroke-width="1.4" fill="none" stroke-linecap="round"/><path d="M4.3 2.7L8 7.1M8 2.7L4.3 7.1" stroke="#1c3a68" stroke-width="1.1" stroke-linecap="round"/><path d="M11.8 3.6h3M11.8 5.9h3" stroke="#1c3a68" stroke-width="1.1"/></svg>
<div class="t" style="left:1318.5px;top:276.52px;letter-spacing:0.387px;">tickstart</div>
<div class="clip" style="left:1462px;top:271px;width:158px;height:25px">
<div class="t" style="left:10px;top:5.52px;letter-spacing:0.369px;">uint32_t</div>
</div>
<div class="t" style="left:1641px;top:276.52px;letter-spacing:0.488px;">8188</div>
<div class="a" style="left:1284px;top:444px;width:635px;height:4px;background:#eceef0"></div>
<div class="a" style="left:332px;top:591px;width:1588px;height:419px;background:#fff;border:1px solid #cdcac6"></div>
<div class="a" style="left:333px;top:592px;width:1586px;height:27px;background:#e7e5e2;border-bottom:1px solid #d2cfcb"></div>
<div class="a" style="left:333px;top:592px;width:98px;height:28px;background:#f6f5f4;border-right:1px solid #d2cfcb"></div>
<svg style="left:338px;top:598px" width="16" height="16" viewBox="0 0 16 16"><rect x="0.5" y="0.5" width="13" height="10" rx="1" fill="#e0ecf8" stroke="#3a6ab0" stroke-width="1.2"/><path d="M3 3.5h8M3 6.5h5" stroke="#3a6ab0" stroke-width="1"/><path d="M4 13.5h6" stroke="#3a6ab0" stroke-width="2"/><path d="M7 11v2" stroke="#3a6ab0"/></svg>
<div class="t" style="left:357.5px;top:600.02px;letter-spacing:-0.076px;">Console</div>
<svg style="left:413px;top:601px" width="11" height="11" viewBox="0 0 11 11"><path d="M1 1l9 9M10 1l-9 9" stroke="#232629" stroke-width="1.1"/></svg>
<svg style="left:435px;top:598px" width="16" height="16" viewBox="0 0 16 16"><path d="M1.5 0.5h8l4 4v11h-12z" fill="#e8eef6" stroke="#7088a8" stroke-width="0.8"/><circle cx="6" cy="5" r="2.5" fill="#e02020"/><path d="M4.5 9l3.5 6.5h-7z" fill="#f8c840" stroke="#a07818" stroke-width="0.6"/></svg>
<div class="t" style="left:455px;top:600.02px;letter-spacing:0.246px;">Problems</div>
<svg style="left:1139px;top:599px" width="16" height="16" viewBox="0 0 16 16"><circle cx="6" cy="6" r="4.5" fill="#f0f6fc" stroke="#8a8a8a" stroke-width="1.2"/><path d="M9.5 9.5l5 5" stroke="#6a4a30" stroke-width="2"/></svg>
<div class="t" style="left:1158px;top:600.02px;letter-spacing:-0.325px;">SWV Data Trace</div>
<svg style="left:1264px;top:599px" width="16" height="16" viewBox="0 0 16 16"><path d="M1 0v15h15" stroke="#202020" stroke-width="1.2" fill="none"/><rect x="2" y="1" width="13" height="13" fill="#fff"/><path d="M2 8l3-3 3 4 3-3 3 2" stroke="#f0a818" stroke-width="1.6" fill="none"/><path d="M1 0v15h15" stroke="#202020" stroke-width="1.2" fill="none"/></svg>
<div class="t" style="left:1283px;top:600.02px;letter-spacing:-0.098px;">SWV Data Trace Timeline Graph</div>
<svg style="left:1566px;top:599px" width="16" height="16" viewBox="0 0 16 16"><rect x="1.5" y="2.5" width="11" height="11" rx="1" fill="#e83a40" stroke="#c0242a"/></svg>
<svg style="left:1587px;top:598px" width="16" height="16" viewBox="0 0 16 16"><path d="M2 3l11 11M13 3l-11 11" stroke="#a8a8a8" stroke-width="3.2"/></svg>
<svg style="left:1609px;top:598px" width="16" height="16" viewBox="0 0 16 16"><path d="M2 3l11 11M13 3l-11 11" stroke="#c0c0c0" stroke-width="3"/><path d="M1 1l4 4M5 1l-4 4" stroke="#c8c8c8"/></svg>
<div class="a" style="left:1631px;top:596px;width:1px;height:22px;background:#c3c3c3"></div>
<svg style="left:1638px;top:598px" width="16" height="16" viewBox="0 0 16 16"><path d="M1.5 0.5h7l3 3v11h-10z" fill="#fff" stroke="#8a98b0" stroke-width="0.8"/><path d="M3 4h6M3 6.5h6M3 9h4" stroke="#5070a0" stroke-width="0.8"/><path d="M10 10l4 4M14 10l-4 4" stroke="#606060" stroke-width="1.5"/></svg>
<svg style="left:1661px;top:598px" width="16" height="16" viewBox="0 0 16 16"><rect x="0.5" y="8.5" width="8" height="7" fill="#f0c040" stroke="#a07818" stroke-width="0.7"/><path d="M2.5 8.5v-3a2 2 0 0 1 4 0v3" stroke="#808080" fill="none"/><rect x="10.5" y="0.5" width="5" height="15" fill="#fff" stroke="#7090b0" stroke-width="0.8"/><path d="M12 4h2M12 8h2M12 12h2" stroke="#4070b0"/></svg>
<svg style="left:1682px;top:598px" width="16" height="16" viewBox="0 0 16 16"><path d="M1.5 0.5h9l3 3v7h-12z" fill="#fff" stroke="#8a98b0" stroke-width="0.8"/><path d="M3 4h6M3 6.5h6" stroke="#5070a0" stroke-width="0.8"/><path d="M14 6v4h-6M10 8l-2 2 2 2" stroke="#e0a820" stroke-width="1.4" fill="none"/></svg>
<div class="a" style="left:1703px;top:596px;width:18px;height:20px;background:#d4d4d4;border:1px solid #c4c4c4;border-radius:2px"></div>
<svg style="left:1704px;top:598px" width="16" height="16" viewBox="0 0 16 16"><rect x="0.5" y="0.5" width="14" height="10" fill="#e0ecf8" stroke="#3a6ab0" stroke-width="1.1"/><path d="M3 3.5h9M3 6h9" stroke="#3a6ab0" stroke-width="1"/><path d="M3 13.5h5M5 11v2" stroke="#3a6ab0" stroke-width="1.6"/></svg>
<div class="a" style="left:1725px;top:596px;width:18px;height:20px;background:#d4d4d4;border:1px solid #c4c4c4;border-radius:2px"></div>
<svg style="left:1726px;top:598px" width="16" height="16" viewBox="0 0 16 16"><rect x="0.5" y="0.5" width="14" height="10" fill="#e0ecf8" stroke="#3a6ab0" stroke-width="1.1"/><path d="M6 2l4 4M10 2l-4 4" stroke="#e02020" stroke-width="1.4"/><path d="M3 8.5h9" stroke="#3a6ab0"/><path d="M3 13.5h5M5 11v2" stroke="#3a6ab0" stroke-width="1.6"/></svg>
<div class="a" style="left:1748px;top:596px;width:1px;height:22px;background:#c3c3c3"></div>
<svg style="left:1756px;top:598px" width="16" height="16" viewBox="0 0 16 16"><rect x="0.5" y="3.5" width="13" height="12" fill="#f4f8fc" stroke="#98845c"/><rect x="1" y="4" width="12" height="2" fill="#5a9ad8"/><path d="M9 8l3-3 1-2 3 3-2 1-3 3z" fill="#3aa040" stroke="#1a6a20" stroke-width="0.6"/><path d="M8 9l2-2" stroke="#555"/></svg>
<svg style="left:1778px;top:598px" width="16" height="16" viewBox="0 0 16 16"><rect x="0.5" y="0.5" width="12" height="10" rx="1" fill="#e0ecf8" stroke="#2a5aa0" stroke-width="1.4"/><path d="M3 4h7M3 6.5h5" stroke="#2a5aa0"/><path d="M3 14h8" stroke="#2a5aa0" stroke-width="2"/></svg>
<svg style="left:1802px;top:603px" width="10" height="6" viewBox="0 0 10 6"><path d="M0 0h10l-5 5z" fill="#232629"/></svg>
<svg style="left:1822px;top:598px" width="16" height="16" viewBox="0 0 16 16"><rect x="0.5" y="3.5" width="13" height="12" fill="#f4f8fc" stroke="#98845c"/><rect x="1" y="4" width="12" height="2" fill="#5a9ad8"/><path d="M10 0.5l3 3h-2v4h-2v-4h-2z" fill="#f8d050" stroke="#c08818" stroke-width="0.6"/></svg>
<svg style="left:1846px;top:603px" width="10" height="6" viewBox="0 0 10 6"><path d="M0 0h10l-5 5z" fill="#232629"/></svg>
<svg style="left:1875px;top:601px" width="12" height="5" viewBox="0 0 12 5"><rect x="0.6" y="0.6" width="10" height="3.2" fill="none" stroke="#232629" stroke-width="1.2"/></svg>
<svg style="left:1897px;top:601px" width="11" height="11" viewBox="0 0 11 11"><rect x="0.6" y="0.6" width="9.6" height="9.8" fill="none" stroke="#232629" stroke-width="1.2"/><path d="M0.6 3h9.6" stroke="#232629" stroke-width="1.2"/></svg>
<div class="a" style="left:333px;top:620px;width:1586px;height:20px;background:#f6f5f4;border-bottom:1px solid #d2cfcb"></div>
<div class="t" style="left:333.5px;top:622.52px;letter-spacing:-0.106px;">MySPITest Debug [STM32 C/C++ Application] ST-LINK (ST-LINK GDB server)</div>
<div class="m" style="left:335px;top:675px;color:#000">Erasing memory corresponding to segment 0</div>
<div class="m" style="left:335px;top:692px;color:#000">Erasing internal memory sectors [0 16]</div>
<div class="m" style="left:335px;top:709px;color:#000">Download in Progress:</div>
<div class="m" style="left:335px;top:760px;color:#000">File download complete</div>
<div class="m" style="left:335px;top:777px;color:#000">Time elapsed during download operation: 00:00:01.157</div>
<div class="m" style="left:335px;top:845px;color:#000">Verifying ...</div>
<div class="m" style="left:335px;top:930px;color:#000">Download verified successfully</div>
<div class="a" style="left:0;top:1011px;width:1920px;height:24px;background:#f4f3f2"></div>
<div class="a" style="left:1250px;top:1012px;width:1px;height:22px;background:#c8c5c1"></div>
<div class="a" style="left:1383px;top:1012px;width:1px;height:22px;background:#c8c5c1"></div>
<div class="a" style="left:1510px;top:1012px;width:1px;height:22px;background:#c8c5c1"></div>
<div class="t" style="left:1257px;top:1014.02px;letter-spacing:0.340px;">Writable</div>
<div class="t" style="left:1390px;top:1014.02px;letter-spacing:0.372px;">Smart Insert</div>
<div class="t" style="left:1517px;top:1014.02px;letter-spacing:0.072px;">25 : 25 : 575</div>
<svg style="left:1635px;top:1016px" width="2" height="16" viewBox="0 0 2 16"><rect x="0" y="0" width="2" height="2" fill="#b5ab9a"/><rect x="0" y="4" width="2" height="2" fill="#b5ab9a"/><rect x="0" y="8" width="2" height="2" fill="#b5ab9a"/><rect x="0" y="12" width="2" height="2" fill="#b5ab9a"/></svg>
<div class="a" style="left:501px;top:427px;width:634px;height:585px;background:#fff;border:1px solid #ebebeb"></div>
<div class="a" style="left:502px;top:428px;width:632px;height:28px;background:#fafafa"></div>
<div class="a" style="left:502px;top:455px;width:632px;height:1px;background:#d6d0ca"></div>
<div class="a" style="left:711px;top:430px;width:1px;height:25px;background:#dcdcdc"></div>
<div class="a" style="left:921px;top:430px;width:1px;height:25px;background:#dcdcdc"></div>
<div class="t" style="left:510.5px;top:435.22px;letter-spacing:0.020px;">Expression</div>
<div class="t" style="left:720px;top:435.22px;letter-spacing:0.180px;">Type</div>
<div class="t" style="left:930px;top:435.22px;letter-spacing:0.094px;">Value</div>
<div class="clip" style="left:502px;top:456px;width:632px;height:262px">
<div class="a" style="left:0;top:0;width:632px;height:25px;background:#3daee9"></div>
<svg style="left:4px;top:10px" width="11" height="7" viewBox="0 0 11 7"><path d="M0.5 0.5l5 5 5-5" stroke="#fff" stroke-width="1" fill="none"/></svg>
<svg style="left:17px;top:4px" width="16" height="16" viewBox="0 0 16 16"><path d="M1 4.5h4l1 1.5h7v2h-12z" fill="#f8d890" stroke="#b87828" stroke-width="0.8"/><path d="M0.5 14.5l3-6h12l-3 6z" fill="#f4c060" stroke="#b87828" stroke-width="0.8"/><ellipse cx="10" cy="3.5" rx="4.5" ry="3" fill="#3a70b0"/><path d="M5.5 4h9v2.5h-9z" fill="#a8c8e8"/></svg>
<div class="t" style="left:34.5px;top:5.92px;color:#fff;letter-spacing:0.335px;">scratch_buffer</div>
<div class="t" style="left:229px;top:5.92px;color:#fff;letter-spacing:0.266px;">uint8_t [64]</div>
<div class="t" style="left:439px;top:5.92px;color:#fff;letter-spacing:0.328px;">0x200000e0 &lt;scratch_buffer&gt;</div>
<svg style="left:32px;top:33px" width="16" height="10" viewBox="0 0 16 10"><path d="M3.3 0.6Q0.7 5 3.3 9.4M8.9 0.6Q11.5 5 8.9 9.4" stroke="#1c3a68" stroke-width="1.4" fill="none" stroke-linecap="round"/><path d="M4.3 2.7L8 7.1M8 2.7L4.3 7.1" stroke="#1c3a68" stroke-width="1.1" stroke-linecap="round"/><path d="M11.8 3.6h3M11.8 5.9h3" stroke="#1c3a68" stroke-width="1.1"/></svg>
<div class="t" style="left:48.5px;top:30.92px;letter-spacing:0.335px;">scratch_buffer[0]</div>
<div class="t" style="left:229px;top:30.92px;letter-spacing:0.350px;">uint8_t</div>
<div class="t" style="left:439px;top:30.92px;letter-spacing:0.412px;">4 '\004'</div>
<svg style="left:32px;top:58px" width="16" height="10" viewBox="0 0 16 10"><path d="M3.3 0.6Q0.7 5 3.3 9.4M8.9 0.6Q11.5 5 8.9 9.4" stroke="#1c3a68" stroke-width="1.4" fill="none" stroke-linecap="round"/><path d="M4.3 2.7L8 7.1M8 2.7L4.3 7.1" stroke="#1c3a68" stroke-width="1.1" stroke-linecap="round"/><path d="M11.8 3.6h3M11.8 5.9h3" stroke="#1c3a68" stroke-width="1.1"/></svg>
<div class="t" style="left:48.5px;top:55.92px;letter-spacing:0.335px;">scratch_buffer[1]</div>
<div class="t" style="left:229px;top:55.92px;letter-spacing:0.350px;">uint8_t</div>
<div class="t" style="left:439px;top:55.92px;letter-spacing:0.412px;">5 '\005'</div>
<svg style="left:32px;top:83px" width="16" height="10" viewBox="0 0 16 10"><path d="M3.3 0.6Q0.7 5 3.3 9.4M8.9 0.6Q11.5 5 8.9 9.4" stroke="#1c3a68" stroke-width="1.4" fill="none" stroke-linecap="round"/><path d="M4.3 2.7L8 7.1M8 2.7L4.3 7.1" stroke="#1c3a68" stroke-width="1.1" stroke-linecap="round"/><path d="M11.8 3.6h3M11.8 5.9h3" stroke="#1c3a68" stroke-width="1.1"/></svg>
<div class="t" style="left:48.5px;top:80.92px;letter-spacing:0.335px;">scratch_buffer[2]</div>
<div class="t" style="left:229px;top:80.92px;letter-spacing:0.350px;">uint8_t</div>
<div class="t" style="left:439px;top:80.92px;letter-spacing:0.412px;">6 '\006'</div>
<svg style="left:32px;top:108px" width="16" height="10" viewBox="0 0 16 10"><path d="M3.3 0.6Q0.7 5 3.3 9.4M8.9 0.6Q11.5 5 8.9 9.4" stroke="#1c3a68" stroke-width="1.4" fill="none" stroke-linecap="round"/><path d="M4.3 2.7L8 7.1M8 2.7L4.3 7.1" stroke="#1c3a68" stroke-width="1.1" stroke-linecap="round"/><path d="M11.8 3.6h3M11.8 5.9h3" stroke="#1c3a68" stroke-width="1.1"/></svg>
<div class="t" style="left:48.5px;top:105.92px;letter-spacing:0.335px;">scratch_buffer[3]</div>
<div class="t" style="left:229px;top:105.92px;letter-spacing:0.350px;">uint8_t</div>
<div class="t" style="left:439px;top:105.92px;letter-spacing:0.219px;">7 '\a'</div>
<svg style="left:32px;top:133px" width="16" height="10" viewBox="0 0 16 10"><path d="M3.3 0.6Q0.7 5 3.3 9.4M8.9 0.6Q11.5 5 8.9 9.4" stroke="#1c3a68" stroke-width="1.4" fill="none" stroke-linecap="round"/><path d="M4.3 2.7L8 7.1M8 2.7L4.3 7.1" stroke="#1c3a68" stroke-width="1.1" stroke-linecap="round"/><path d="M11.8 3.6h3M11.8 5.9h3" stroke="#1c3a68" stroke-width="1.1"/></svg>
<div class="t" style="left:48.5px;top:130.92px;letter-spacing:0.335px;">scratch_buffer[4]</div>
<div class="t" style="left:229px;top:130.92px;letter-spacing:0.350px;">uint8_t</div>
<div class="t" style="left:439px;top:130.92px;letter-spacing:0.385px;">0 '\0'</div>
<svg style="left:32px;top:158px" width="16" height="10" viewBox="0 0 16 10"><path d="M3.3 0.6Q0.7 5 3.3 9.4M8.9 0.6Q11.5 5 8.9 9.4" stroke="#1c3a68" stroke-width="1.4" fill="none" stroke-linecap="round"/><path d="M4.3 2.7L8 7.1M8 2.7L4.3 7.1" stroke="#1c3a68" stroke-width="1.1" stroke-linecap="round"/><path d="M11.8 3.6h3M11.8 5.9h3" stroke="#1c3a68" stroke-width="1.1"/></svg>
<div class="t" style="left:48.5px;top:155.92px;letter-spacing:0.335px;">scratch_buffer[5]</div>
<div class="t" style="left:229px;top:155.92px;letter-spacing:0.350px;">uint8_t</div>
<div class="t" style="left:439px;top:155.92px;letter-spacing:0.385px;">0 '\0'</div>
<svg style="left:32px;top:183px" width="16" height="10" viewBox="0 0 16 10"><path d="M3.3 0.6Q0.7 5 3.3 9.4M8.9 0.6Q11.5 5 8.9 9.4" stroke="#1c3a68" stroke-width="1.4" fill="none" stroke-linecap="round"/><path d="M4.3 2.7L8 7.1M8 2.7L4.3 7.1" stroke="#1c3a68" stroke-width="1.1" stroke-linecap="round"/><path d="M11.8 3.6h3M11.8 5.9h3" stroke="#1c3a68" stroke-width="1.1"/></svg>
<div class="t" style="left:48.5px;top:180.92px;letter-spacing:0.335px;">scratch_buffer[6]</div>
<div class="t" style="left:229px;top:180.92px;letter-spacing:0.350px;">uint8_t</div>
<div class="t" style="left:439px;top:180.92px;letter-spacing:0.385px;">0 '\0'</div>
<svg style="left:32px;top:208px" width="16" height="10" viewBox="0 0 16 10"><path d="M3.3 0.6Q0.7 5 3.3 9.4M8.9 0.6Q11.5 5 8.9 9.4" stroke="#1c3a68" stroke-width="1.4" fill="none" stroke-linecap="round"/><path d="M4.3 2.7L8 7.1M8 2.7L4.3 7.1" stroke="#1c3a68" stroke-width="1.1" stroke-linecap="round"/><path d="M11.8 3.6h3M11.8 5.9h3" stroke="#1c3a68" stroke-width="1.1"/></svg>
<div class="t" style="left:48.5px;top:205.92px;letter-spacing:0.335px;">scratch_buffer[7]</div>
<div class="t" style="left:229px;top:205.92px;letter-spacing:0.350px;">uint8_t</div>
<div class="t" style="left:439px;top:205.92px;letter-spacing:0.385px;">0 '\0'</div>
<svg style="left:32px;top:233px" width="16" height="10" viewBox="0 0 16 10"><path d="M3.3 0.6Q0.7 5 3.3 9.4M8.9 0.6Q11.5 5 8.9 9.4" stroke="#1c3a68" stroke-width="1.4" fill="none" stroke-linecap="round"/><path d="M4.3 2.7L8 7.1M8 2.7L4.3 7.1" stroke="#1c3a68" stroke-width="1.1" stroke-linecap="round"/><path d="M11.8 3.6h3M11.8 5.9h3" stroke="#1c3a68" stroke-width="1.1"/></svg>
<div class="t" style="left:48.5px;top:230.92px;letter-spacing:0.335px;">scratch_buffer[8]</div>
<div class="t" style="left:229px;top:230.92px;letter-spacing:0.350px;">uint8_t</div>
<div class="t" style="left:439px;top:230.92px;letter-spacing:0.385px;">0 '\0'</div>
<svg style="left:32px;top:258px" width="16" height="10" viewBox="0 0 16 10"><path d="M3.3 0.6Q0.7 5 3.3 9.4M8.9 0.6Q11.5 5 8.9 9.4" stroke="#1c3a68" stroke-width="1.4" fill="none" stroke-linecap="round"/><path d="M4.3 2.7L8 7.1M8 2.7L4.3 7.1" stroke="#1c3a68" stroke-width="1.1" stroke-linecap="round"/><path d="M11.8 3.6h3M11.8 5.9h3" stroke="#1c3a68" stroke-width="1.1"/></svg>
<div class="t" style="left:48.5px;top:255.92px;letter-spacing:0.335px;">scratch_buffer[9]</div>
<div class="t" style="left:229px;top:255.92px;letter-spacing:0.350px;">uint8_t</div>
<div class="t" style="left:439px;top:255.92px;letter-spacing:0.385px;">0 '\0'</div>
</div>
<div class="a" style="left:502px;top:718px;width:632px;height:3px;background:#ebebeb"></div>
<div class="m" style="left:504px;top:721.4px;color:#000">Name : scratch_buffer</div>
<div class="m" style="left:504px;top:738.4px;color:#000">    Details:"\004\005\006\a", '\0' &lt;repeats 59 times&gt;</div>
<div class="m" style="left:504px;top:755.4px;color:#000">    Default:0x200000e0 &lt;scratch_buffer&gt;</div>
<div class="m" style="left:504px;top:772.4px;color:#000">    Decimal:536871136</div>
<div class="m" style="left:504px;top:789.4px;color:#000">    Hex:0x200000e0</div>
<div class="m" style="left:504px;top:806.4px;color:#000">    Binary:100000000000000000000011100000</div>
<div class="m" style="left:504px;top:823.4px;color:#000">    Octal:04000000340</div>
</body></html>
